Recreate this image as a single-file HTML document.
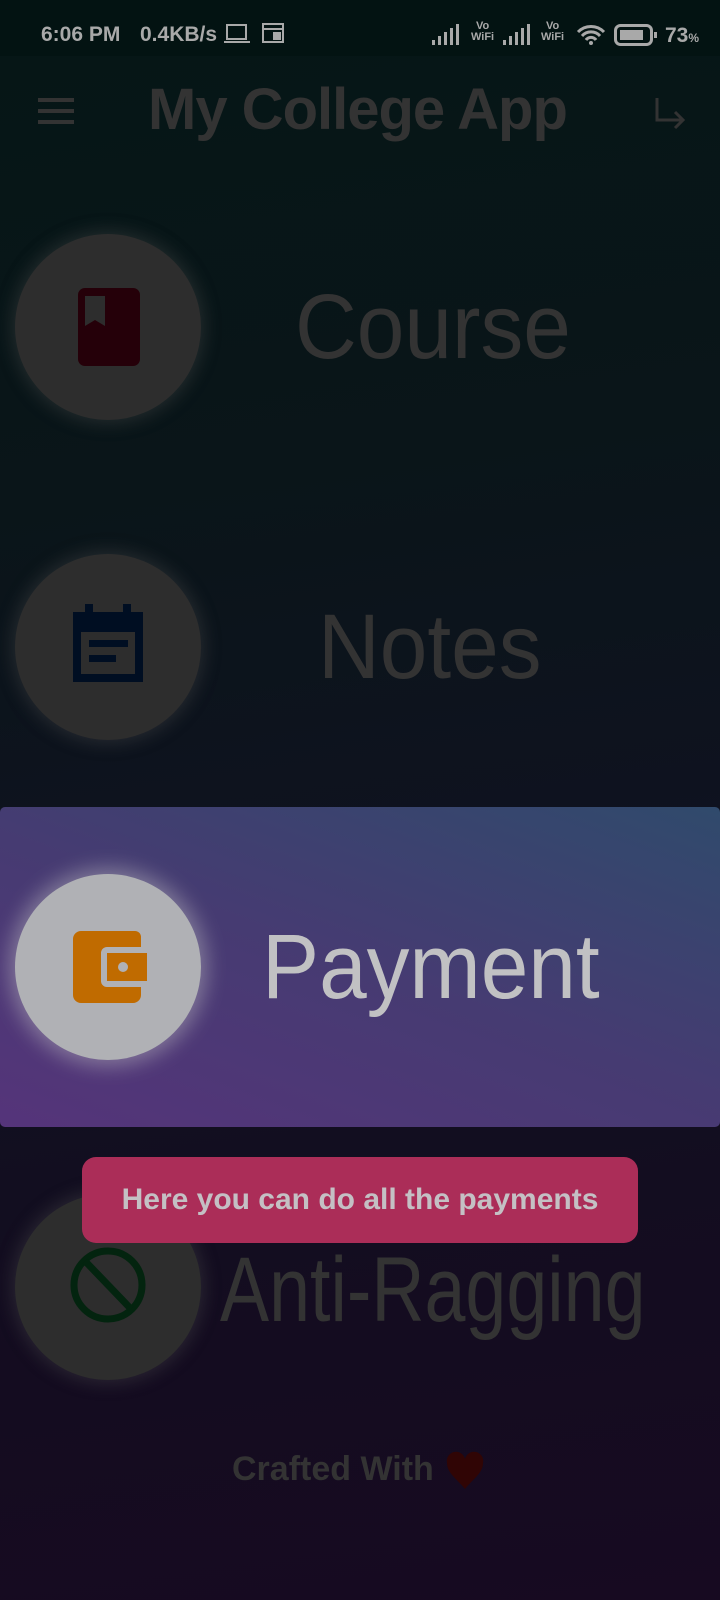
<!DOCTYPE html>
<html><head><meta charset="utf-8">
<style>
*{margin:0;padding:0;box-sizing:border-box}
body{width:720px;height:1600px;overflow:hidden;font-family:"Liberation Sans",sans-serif;position:relative;
background:linear-gradient(172deg,#051616 0%,#0a1519 30%,#0f1220 55%,#130d20 75%,#170a21 100%);}
.sb{position:absolute;left:0;top:0;width:720px;height:56px;background:#031312;color:#a9a9a9;font-weight:bold;font-size:21px}
.a{position:absolute;white-space:nowrap}
.circ{position:absolute;width:186px;height:186px;border-radius:50%;background:#2d2d2d;box-shadow:0 0 16px 4px rgba(80,80,80,.35)}
.lbl{position:absolute;color:#333;font-size:92px;white-space:nowrap;transform-origin:left top}
</style></head><body>
<div class="sb">
 <div class="a" style="left:41px;top:23px">6:06 PM</div>
 <div class="a" style="left:140px;top:23px">0.4KB/s</div>
 <svg class="a" style="left:224px;top:23px" width="26" height="22" viewBox="0 0 26 22"><rect x="3" y="2" width="19" height="14" fill="none" stroke="#a9a9a9" stroke-width="2"/><rect x="0" y="18" width="26" height="2" fill="#a9a9a9"/></svg>
 <svg class="a" style="left:262px;top:22px" width="22" height="22" viewBox="0 0 22 22"><rect x="1" y="2" width="20" height="18" fill="none" stroke="#a9a9a9" stroke-width="2"/><rect x="1" y="6" width="20" height="2" fill="#a9a9a9"/><rect x="11" y="10" width="8" height="8" fill="#a9a9a9"/></svg>
 <svg class="a" style="left:432px;top:24px" width="30" height="22" viewBox="0 0 30 22"><rect x="0" y="16" width="3" height="5" fill="#a9a9a9"/><rect x="6" y="12" width="3" height="9" fill="#a9a9a9"/><rect x="12" y="8" width="3" height="13" fill="#a9a9a9"/><rect x="18" y="4" width="3" height="17" fill="#a9a9a9"/><rect x="24" y="0" width="3" height="21" fill="#a9a9a9"/></svg>
 <div class="a" style="left:471px;top:21px;font-size:11px;line-height:11px;text-align:center">Vo<br>WiFi</div>
 <svg class="a" style="left:503px;top:24px" width="30" height="22" viewBox="0 0 30 22"><rect x="0" y="16" width="3" height="5" fill="#a9a9a9"/><rect x="6" y="12" width="3" height="9" fill="#a9a9a9"/><rect x="12" y="8" width="3" height="13" fill="#a9a9a9"/><rect x="18" y="4" width="3" height="17" fill="#a9a9a9"/><rect x="24" y="0" width="3" height="21" fill="#a9a9a9"/></svg>
 <div class="a" style="left:541px;top:21px;font-size:11px;line-height:11px;text-align:center">Vo<br>WiFi</div>
 <svg class="a" style="left:576px;top:24px" width="30" height="22" viewBox="0 0 30 22"><path d="M2 8 A18 18 0 0 1 28 8 M6 12 A12 12 0 0 1 24 12 M10 16 A6 6 0 0 1 20 16" fill="none" stroke="#a9a9a9" stroke-width="3"/><circle cx="15" cy="19" r="2" fill="#a9a9a9"/></svg>
 <svg class="a" style="left:614px;top:24px" width="44" height="22" viewBox="0 0 44 22"><rect x="1.5" y="1.5" width="36" height="19" rx="5" fill="none" stroke="#a9a9a9" stroke-width="3"/><rect x="6" y="6" width="23" height="10" fill="#a9a9a9"/><rect x="40" y="8" width="3" height="6" fill="#a9a9a9"/></svg>
 <div class="a" style="left:665px;top:24px">73<span style="font-size:12px">%</span></div>
</div>
<svg class="a" style="left:38px;top:98px" width="36" height="26" viewBox="0 0 36 26"><rect y="0" width="36" height="4" fill="#333"/><rect y="11" width="36" height="4" fill="#333"/><rect y="22" width="36" height="4" fill="#333"/></svg>
<div class="a" style="left:148px;top:76px;font-size:58px;font-weight:bold;color:#333;letter-spacing:-1px">My College App</div>
<svg class="a" style="left:653px;top:96px" width="34" height="34" viewBox="0 0 34 34"><path d="M4 2 V24 H30 M22 16 L30 24 L22 32" fill="none" stroke="#333" stroke-width="3"/></svg>

<div class="circ" style="left:15px;top:234px"></div>
<svg class="a" style="left:78px;top:288px" width="62" height="78" viewBox="0 0 62 78"><path d="M7 0H55a7 7 0 0 1 7 7V71a7 7 0 0 1-7 7H7a7 7 0 0 1-7-7V7a7 7 0 0 1 7-7Z M7 8V38L17 32L27 38V8Z" fill="#250009" fill-rule="evenodd"/></svg>
<div class="lbl" style="left:295px;top:275px;transform:scaleX(.93)">Course</div>

<div class="circ" style="left:15px;top:554px"></div>
<svg class="a" style="left:73px;top:604px" width="70" height="80" viewBox="0 0 70 80"><path d="M0 8H12V0H20V8H50V0H58V8H70V78H0Z M8 28V70H62V28Z M16 36H55V43H16Z M16 51H43V58H16Z" fill="#000e22" fill-rule="evenodd"/></svg>
<div class="lbl" style="left:318px;top:595px;transform:scaleX(.93)">Notes</div>

<div class="a" style="left:0;top:807px;width:720px;height:320px;border-radius:5px;background:linear-gradient(20deg,#55347a 0%,#463b72 50%,#304a6c 100%)"></div>
<div class="circ" style="left:15px;top:874px;background:#b0b1b5;box-shadow:0 0 20px 6px rgba(200,200,200,.45)"></div>
<svg class="a" style="left:73px;top:931px" width="74" height="72" viewBox="0 0 74 72"><path d="M8 0H62a6 6 0 0 1 6 6V16H34a6 6 0 0 0-6 6V50a6 6 0 0 0 6 6H68V64a8 8 0 0 1-8 8H8a8 8 0 0 1-8-8V8a8 8 0 0 1 8-8Z M34 22H74V50H34Z" fill="#c06b00"/><rect x="35" y="23" width="38" height="26" fill="#c06b00"/><circle cx="50" cy="36" r="5" fill="#b0b1b5"/></svg>
<div class="lbl" style="left:262px;top:915px;color:#c1c1c3;transform:scaleX(.93)">Payment</div>

<div class="circ" style="left:15px;top:1194px"></div>
<svg class="a" style="left:68px;top:1245px" width="80" height="80" viewBox="0 0 80 80"><circle cx="40" cy="40" r="34" fill="none" stroke="#03240f" stroke-width="7"/><path d="M17 16L63 64" stroke="#03240f" stroke-width="7"/></svg>
<div class="lbl" style="left:220px;top:1238px;transform:scaleX(.8)">Anti-Ragging</div>

<div class="a" style="left:82px;top:1157px;width:556px;height:86px;border-radius:14px;background:#ab2d58"></div>
<div class="a" style="left:82px;top:1183px;width:556px;text-align:center;font-size:30px;font-weight:bold;color:#c4c0c4">Here you can do all the payments</div>

<div class="a" style="left:232px;top:1450px;font-size:34px;font-weight:bold;color:#333">Crafted With</div>
<svg class="a" style="left:445px;top:1451px" width="40" height="40" viewBox="0 0 40 40"><path d="M20 38C12 28 2 22 2 12A9 9 0 0 1 20 8A9 9 0 0 1 38 12C38 22 28 28 20 38Z" fill="#300505"/></svg>
</body></html>
